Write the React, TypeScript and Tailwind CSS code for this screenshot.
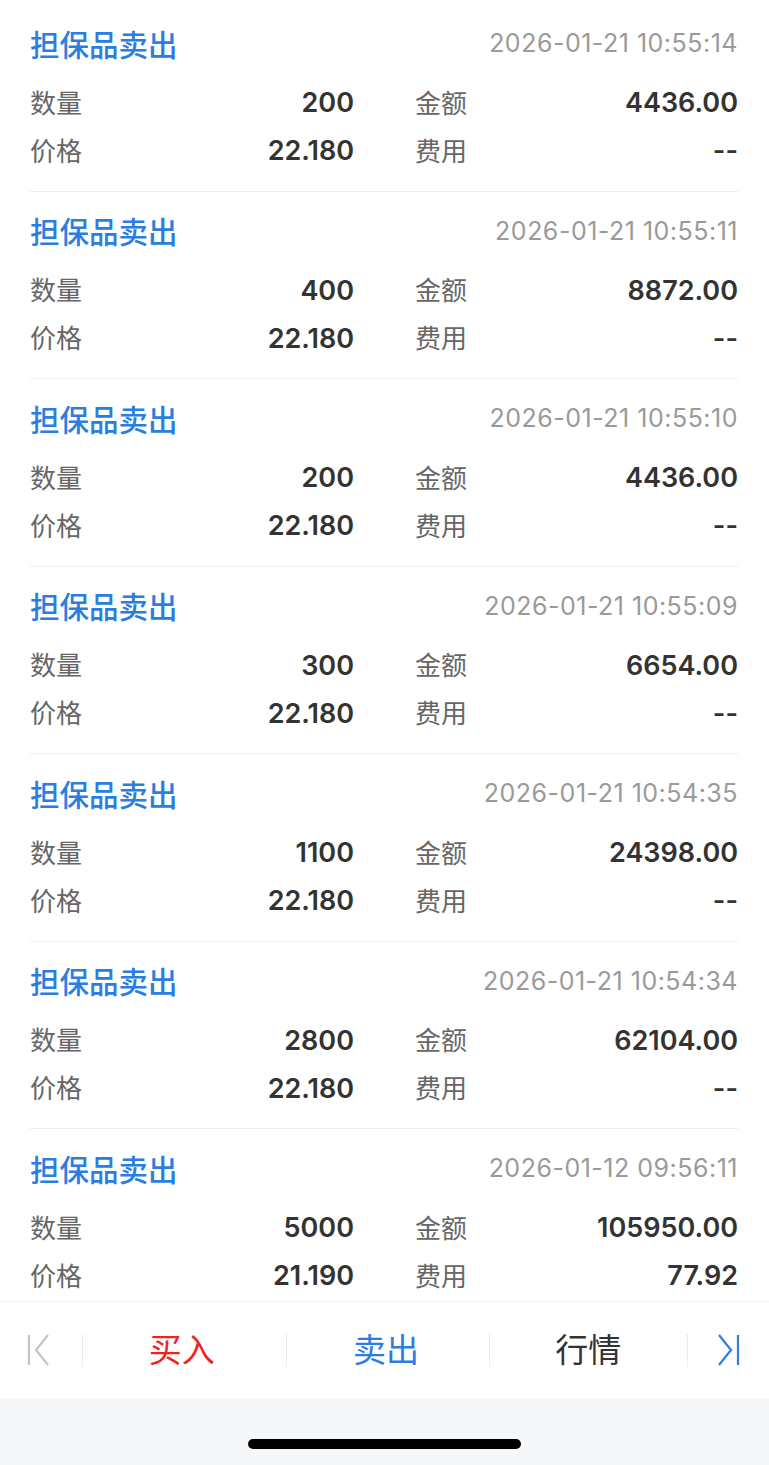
import React from 'react';

type Trade = {
  time: string;
  qty: string;
  amount: string;
  price: string;
  fee: string;
};

const trades: Trade[] = [
  { time: '2026-01-21 10:55:14', qty: '200', amount: '4436.00', price: '22.180', fee: '--' },
  { time: '2026-01-21 10:55:11', qty: '400', amount: '8872.00', price: '22.180', fee: '--' },
  { time: '2026-01-21 10:55:10', qty: '200', amount: '4436.00', price: '22.180', fee: '--' },
  { time: '2026-01-21 10:55:09', qty: '300', amount: '6654.00', price: '22.180', fee: '--' },
  { time: '2026-01-21 10:54:35', qty: '1100', amount: '24398.00', price: '22.180', fee: '--' },
  { time: '2026-01-21 10:54:34', qty: '2800', amount: '62104.00', price: '22.180', fee: '--' },
  { time: '2026-01-12 09:56:11', qty: '5000', amount: '105950.00', price: '21.190', fee: '77.92' },
];

const cjk = "font-['Noto_Sans_CJK_SC',sans-serif]";
const num = "font-['Inter','Noto_Sans_CJK_SC',sans-serif]";

const Cell: React.FC<{ label: string; value: string }> = ({ label, value }) => (
  <div className="flex items-center justify-between">
    <span className={`${cjk} text-[26px] leading-[48px] text-[#666] -mt-[3px]`}>{label}</span>
    <span className={`${num} text-[27px] leading-[48px] font-semibold text-[#333]`}>{value}</span>
  </div>
);

const TradeRow: React.FC<{ trade: Trade }> = ({ trade }) => (
  <div className="h-[187.5px] shrink-0 border-b border-[#eeeeee] pt-[20px] flex flex-col">
    <div className="flex items-center justify-between h-[40px]">
      <span className={`${cjk} text-[29.5px] font-medium text-[#2a7de1] -mt-[2px]`}>担保品卖出</span>
      <span className={`${num} text-[25px] tracking-[0.5px] text-[#9a9a9a]`}>{trade.time}</span>
    </div>
    <div className="mt-[15px] grid grid-cols-[324px_323px] gap-x-[61px]">
      <Cell label="数量" value={trade.qty} />
      <Cell label="金额" value={trade.amount} />
      <Cell label="价格" value={trade.price} />
      <Cell label="费用" value={trade.fee} />
    </div>
  </div>
);

const Divider = () => <div className="w-px h-[33px] bg-[#ececec]" />;

const App: React.FC = () => {
  return (
    <div className="w-[769px] h-[1465px] bg-white flex flex-col overflow-hidden">
      {/* trade list */}
      <div className="flex-1 overflow-hidden pl-[30px] pr-[31px]">
        <div className="h-[4px]" />
        {trades.map((t) => (
          <TradeRow key={t.time} trade={t} />
        ))}
      </div>

      {/* bottom bar */}
      <div className="h-[97px] shrink-0 border-t border-[#f2f3f5] flex items-center">
        <div className="w-[82px] flex items-center pl-[27px]">
          <svg width="24" height="32" viewBox="0 0 24 32" fill="none" stroke="#c4c4c4" strokeWidth="2.2">
            <line x1="2" y1="1" x2="2" y2="31" />
            <polyline points="21,1 9,16 21,31" />
          </svg>
        </div>
        <Divider />
        <div className={`${cjk} flex-1 text-center text-[33px] text-[#f2221f] -mt-[2px] pr-[6px]`}>买入</div>
        <Divider />
        <div className={`${cjk} flex-1 text-center text-[33px] text-[#2a7de1] -mt-[2px] pr-[4px]`}>卖出</div>
        <Divider />
        <div className={`${cjk} flex-1 text-center text-[33px] text-[#333] -mt-[2px]`}>行情</div>
        <Divider />
        <div className="w-[81px] flex items-center justify-end pr-[29px]">
          <svg width="22" height="32" viewBox="0 0 22 32" fill="none" stroke="#2a7de1" strokeWidth="2.2">
            <polyline points="1,1 13,16 1,31" />
            <line x1="20" y1="1" x2="20" y2="31" />
          </svg>
        </div>
      </div>

      {/* home indicator area */}
      <div className="h-[67px] shrink-0 bg-[#f6f7f9] flex justify-center pt-[41px]">
        <div className="w-[273px] h-[10px] rounded-full bg-black" />
      </div>
    </div>
  );
};

export default App;
